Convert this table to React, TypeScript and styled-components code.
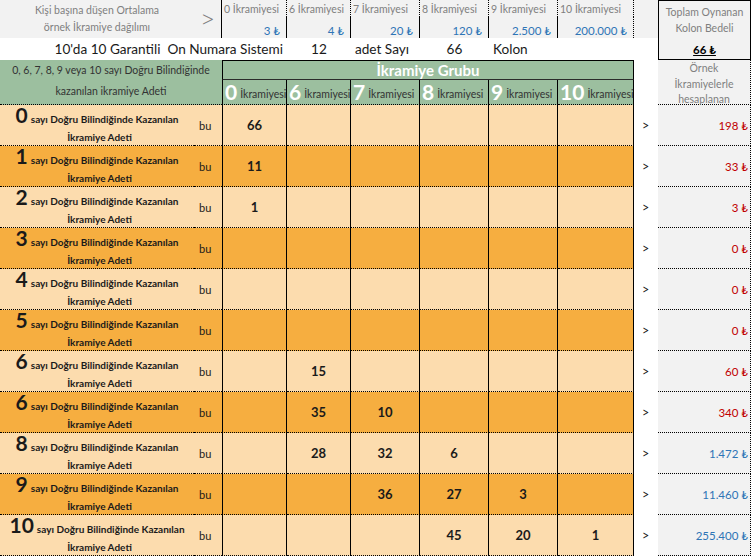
import React from "react";
import styled, { createGlobalStyle } from "styled-components";

const GlobalStyle = createGlobalStyle`
  html, body { margin: 0; padding: 0; background: #ffffff; }
  body { font-family: Lato, "Open Sans", "DejaVu Sans", sans-serif; }
  *, *::before, *::after { box-sizing: border-box; }
`;

const GRAY_BG = "#f2f2f2";
const GRAY_TEXT = "#7f7f7f";
const GREEN = "#9cbf9f";
const PEACH = "#fcdcae";
const ORANGE = "#f6ae40";
const RED = "#c00000";
const BLUE = "#2e75b6";

const Sheet = styled.div`
  display: grid;
  grid-template-columns: 194px 28px 65px 64px 69px 69px 69px 76px 24px 93px;
  grid-template-rows: 17px 21px 22px 20px 25px repeat(11, 41px);
  width: 753px;
  height: 557px;
  overflow: hidden;
  color: #1a1a1a;
`;

/* ---------- top summary band ---------- */
const TopLabel = styled.div`
  grid-column: 1;
  grid-row: 1 / 3;
  background: ${GRAY_BG};
  color: ${GRAY_TEXT};
  font-size: 10.5px;
  line-height: 17px;
  display: flex;
  flex-direction: column;
  align-items: center;
  justify-content: center;
`;

const TopArrow = styled.div`
  grid-column: 2;
  grid-row: 1 / 3;
  background: ${GRAY_BG};
  border-right: 1px solid #000;
  color: ${GRAY_TEXT};
  font-size: 26px;
  font-weight: 300;
  display: flex;
  align-items: center;
  justify-content: center;
  padding-bottom: 2px;
`;

const PrizeHead = styled.div<{ $col: number }>`
  grid-column: ${(p) => p.$col};
  grid-row: 1;
  background: ${GRAY_BG};
  border-right: 1px dotted #000;
  color: ${GRAY_TEXT};
  font-size: 10.5px;
  padding: 3px 0 0 2px;
  white-space: nowrap;
  line-height: 12px;
`;

const PrizeValue = styled.div<{ $col: number; $last?: boolean }>`
  grid-column: ${(p) => p.$col};
  grid-row: 2;
  background: ${GRAY_BG};
  border-right: 1px ${(p) => (p.$last ? "dotted" : "solid")} #000;
  color: ${BLUE};
  font-size: 11.5px;
  text-align: right;
  padding: 7px 6px 0 0;
  white-space: nowrap;
`;

const TopGap = styled.div`
  grid-column: 9;
  grid-row: 1 / 3;
  background: ${GRAY_BG};
`;

const TotalBox = styled.div`
  grid-column: 10;
  grid-row: 1 / 4;
  background: ${GRAY_BG};
  border: 1px solid #000;
  display: flex;
  flex-direction: column;
  align-items: center;
  padding-top: 3px;
  font-size: 10.5px;
  line-height: 16px;
  color: ${GRAY_TEXT};
`;

const TotalValue = styled.div`
  margin-top: 6px;
  color: #000;
  font-weight: 700;
  font-size: 11.5px;
  text-decoration: underline;
`;

/* ---------- title line ---------- */
const TitleCell = styled.div<{ $col: string; $align: "left" | "center" | "right" }>`
  grid-column: ${(p) => p.$col};
  grid-row: 3;
  background: #fff;
  font-size: 13.6px;
  line-height: 22px;
  white-space: pre;
  text-align: ${(p) => p.$align};
  padding: ${(p) => (p.$align === "right" ? "0 4px 0 0" : p.$align === "left" ? "0 0 0 4px" : "0")};
`;

/* ---------- green header ---------- */
const GreenLeft = styled.div`
  grid-column: 1 / 3;
  grid-row: 4 / 6;
  background: ${GREEN};
  border-bottom: 1px dotted #000;
  color: #333;
  font-size: 10.5px;
  line-height: 21px;
  text-align: center;
  padding-top: 0;
`;

const GroupTitle = styled.div`
  grid-column: 3 / 9;
  grid-row: 4;
  background: ${GREEN};
  border: 1px solid #000;
  border-bottom: 1px solid #2b2b2b;
  color: #fff;
  font-weight: 700;
  font-size: 15px;
  display: flex;
  align-items: center;
  justify-content: center;
`;

const SubHead = styled.div<{ $col: number; $first?: boolean }>`
  grid-column: ${(p) => p.$col};
  grid-row: 5;
  background: ${GREEN};
  border-right: 1px solid #000;
  border-left: ${(p) => (p.$first ? "1px solid #000" : "none")};
  border-bottom: 1px dotted #000;
  display: flex;
  align-items: flex-end;
  padding: 0 0 1px 2px;
  white-space: nowrap;
  overflow: visible;
`;

const SubNum = styled.span`
  color: #fff;
  font-weight: 700;
  font-size: 21px;
  line-height: 22px;
  margin-right: 3px;
`;

const SubWord = styled.span`
  color: #333;
  font-size: 10.5px;
  line-height: 17px;
`;

const ExampleHead = styled.div`
  grid-column: 10;
  grid-row: 4 / 6;
  background: ${GRAY_BG};
  border-bottom: 1px dotted #000;
  border-right: 1px dotted #000;
  color: ${GRAY_TEXT};
  font-size: 10.5px;
  line-height: 15.5px;
  text-align: center;
  padding-top: 1px;
`;

const HeadGap = styled.div`
  grid-column: 9;
  grid-row: 4 / 6;
  background: #fff;
`;

/* ---------- data rows ---------- */
type Tone = "light" | "dark";

const RowCell = styled.div<{ $tone: Tone; $row: number }>`
  grid-row: ${(p) => p.$row};
  background: ${(p) => (p.$tone === "light" ? PEACH : ORANGE)};
  border-bottom: 1px dotted #000;
`;

const LabelCell = styled(RowCell)`
  grid-column: 1;
  display: flex;
  flex-direction: column;
  align-items: center;
  justify-content: center;
  font-weight: 700;
  font-size: 10px;
  padding-top: 1px;
`;

const LabelTop = styled.div`
  display: flex;
  align-items: baseline;
  white-space: nowrap;
  line-height: 19px;
`;

const BigNum = styled.span`
  font-size: 21px;
  font-weight: 700;
  margin-right: 3px;
`;

const LabelBottom = styled.div`
  line-height: 17px;
  padding-left: 5px;
`;

const BuCell = styled(RowCell)`
  grid-column: 2;
  font-size: 11px;
  display: flex;
  align-items: center;
  padding-left: 5px;
`;

const ValueCell = styled(RowCell)<{ $col: number; $first?: boolean }>`
  grid-column: ${(p) => p.$col};
  border-right: 1px solid #000;
  border-left: ${(p) => (p.$first ? "1px solid #000" : "none")};
  display: flex;
  align-items: center;
  justify-content: center;
  font-weight: 700;
  font-size: 13px;
`;

const ArrowCell = styled.div<{ $row: number }>`
  grid-column: 9;
  grid-row: ${(p) => p.$row};
  background: #fff;
  display: flex;
  align-items: center;
  padding-left: 8px;
  font-size: 12.5px;
`;

const ResultCell = styled.div<{ $row: number; $color: string }>`
  grid-column: 10;
  grid-row: ${(p) => p.$row};
  background: ${GRAY_BG};
  border-bottom: 1px dotted #000;
  border-right: 1px dotted #000;
  color: ${(p) => p.$color};
  font-size: 11.5px;
  display: flex;
  align-items: center;
  justify-content: flex-end;
  padding-right: 2px;
  white-space: nowrap;
`;

const PRIZES = [
  { label: "0", value: "3 ₺" },
  { label: "6", value: "4 ₺" },
  { label: "7", value: "20 ₺" },
  { label: "8", value: "120 ₺" },
  { label: "9", value: "2.500 ₺" },
  { label: "10", value: "200.000 ₺" },
];

type Row = {
  n: string;
  vals: Record<number, string>;
  result: string;
  blue?: boolean;
};

const ROWS: Row[] = [
  { n: "0", vals: { 0: "66" }, result: "198 ₺" },
  { n: "1", vals: { 0: "11" }, result: "33 ₺" },
  { n: "2", vals: { 0: "1" }, result: "3 ₺" },
  { n: "3", vals: {}, result: "0 ₺" },
  { n: "4", vals: {}, result: "0 ₺" },
  { n: "5", vals: {}, result: "0 ₺" },
  { n: "6", vals: { 1: "15" }, result: "60 ₺" },
  { n: "6", vals: { 1: "35", 2: "10" }, result: "340 ₺" },
  { n: "8", vals: { 1: "28", 2: "32", 3: "6" }, result: "1.472 ₺", blue: true },
  { n: "9", vals: { 2: "36", 3: "27", 4: "3" }, result: "11.460 ₺", blue: true },
  { n: "10", vals: { 3: "45", 4: "20", 5: "1" }, result: "255.400 ₺", blue: true },
];

export default function App() {
  return (
    <>
      <GlobalStyle />
      <Sheet>
        <TopLabel>
          <div>Kişi başına düşen Ortalama</div>
          <div>örnek İkramiye dağılımı</div>
        </TopLabel>
        <TopArrow>&gt;</TopArrow>
        {PRIZES.map((p, i) => (
          <React.Fragment key={p.label}>
            <PrizeHead $col={i + 3}>{p.label} İkramiyesi</PrizeHead>
            <PrizeValue $col={i + 3} $last={i === PRIZES.length - 1}>
              {p.value}
            </PrizeValue>
          </React.Fragment>
        ))}
        <TopGap />
        <TotalBox>
          <div>Toplam Oynanan</div>
          <div>Kolon Bedeli</div>
          <TotalValue>66 ₺</TotalValue>
        </TotalBox>

        <TitleCell $col="1 / 4" $align="right">
          {"10'da 10 Garantili  On Numara Sistemi"}
        </TitleCell>
        <TitleCell $col="4" $align="center">12</TitleCell>
        <TitleCell $col="5" $align="left">adet Sayı</TitleCell>
        <TitleCell $col="6" $align="center">66</TitleCell>
        <TitleCell $col="7" $align="left">Kolon</TitleCell>
        <TitleCell $col="8 / 10" $align="left" />

        <GreenLeft>
          <div>0, 6, 7, 8, 9 veya 10 sayı Doğru Bilindiğinde</div>
          <div>kazanılan ikramiye Adeti</div>
        </GreenLeft>
        <GroupTitle>İkramiye Grubu</GroupTitle>
        {PRIZES.map((p, i) => (
          <SubHead key={p.label} $col={i + 3} $first={i === 0}>
            <SubNum>{p.label}</SubNum>
            <SubWord>İkramiyesi</SubWord>
          </SubHead>
        ))}
        <HeadGap />
        <ExampleHead>
          <div>Örnek</div>
          <div>İkramiyelerle</div>
          <div>hesaplanan</div>
        </ExampleHead>

        {ROWS.map((r, ri) => {
          const row = ri + 6;
          const tone: Tone = ri % 2 === 0 ? "light" : "dark";
          return (
            <React.Fragment key={ri}>
              <LabelCell $tone={tone} $row={row}>
                <LabelTop>
                  <BigNum>{r.n}</BigNum>
                  <span>sayı Doğru Bilindiğinde Kazanılan</span>
                </LabelTop>
                <LabelBottom>İkramiye Adeti</LabelBottom>
              </LabelCell>
              <BuCell $tone={tone} $row={row}>bu</BuCell>
              {PRIZES.map((p, ci) => (
                <ValueCell key={p.label} $tone={tone} $row={row} $col={ci + 3} $first={ci === 0}>
                  {r.vals[ci] ?? ""}
                </ValueCell>
              ))}
              <ArrowCell $row={row}>&gt;</ArrowCell>
              <ResultCell $row={row} $color={r.blue ? BLUE : RED}>
                {r.result}
              </ResultCell>
            </React.Fragment>
          );
        })}
      </Sheet>
    </>
  );
}
